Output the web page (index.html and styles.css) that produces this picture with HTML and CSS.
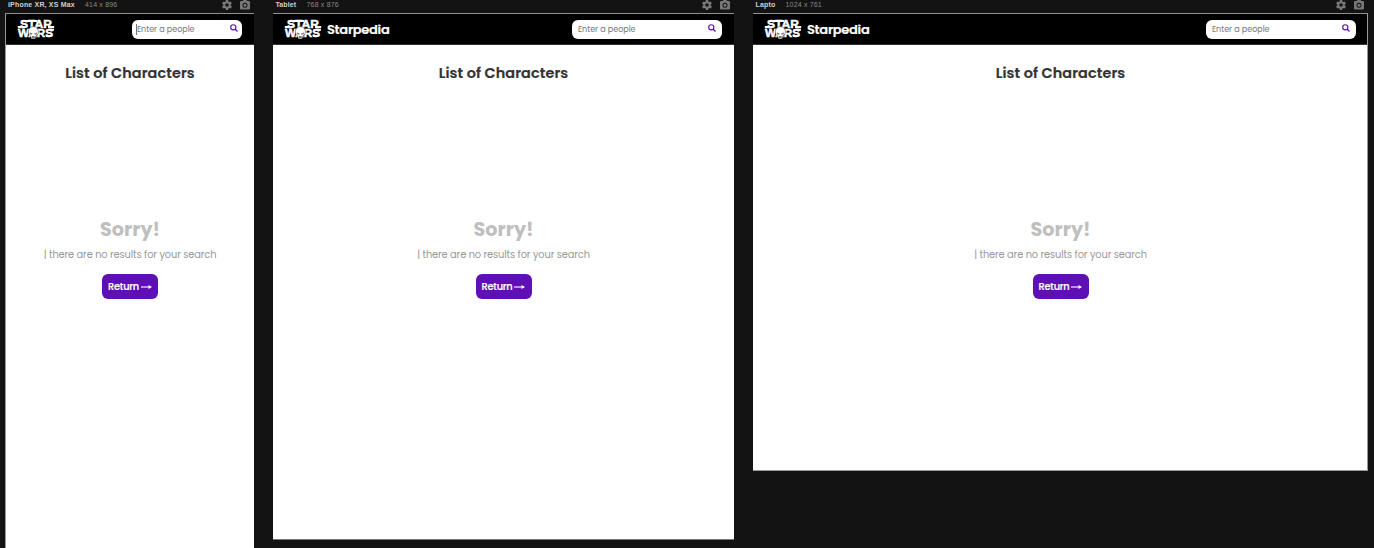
FILE: index.html
```html
<!DOCTYPE html>
<html lang="en">
<head>
<meta charset="utf-8">
<title>Starpedia</title>
<link rel="stylesheet" href="styles.css">
</head>
<body>
<svg class="defs" aria-hidden="true">
  <symbol id="gear" viewBox="0 0 24 24"><path fill-rule="evenodd" d="M19.4 13a7.500 7.500 0 0 0 0-2l2.100-1.650a.5.5 0 0 0 .12-.64l-2-3.460a.5.5 0 0 0-.61-.22l-2.490 1a7.300 7.300 0 0 0-1.690-.98l-.38-2.650A.5.5 0 0 0 14 2h-4a.5.5 0 0 0-.49.42l-.38 2.650a7.700 7.700 0 0 0-1.690.98l-2.490-1a.5.5 0 0 0-.61.22l-2 3.460a.5.5 0 0 0 .12.64L4.570 11a7.900 7.900 0 0 0 0 2l-2.110 1.650a.5.5 0 0 0-.12.64l2 3.460c.12.22.39.3.61.22l2.490-1c.52.4 1.080.73 1.690.98l.38 2.650c.03.24.24.4.49.4h4c.25 0 .46-.16.49-.4l.38-2.650a7.700 7.700 0 0 0 1.690-.98l2.490 1c.23.09.49 0 .61-.22l2-3.460a.5.5 0 0 0-.12-.64zM12 15.500a3.500 3.500 0 1 1 0-7 3.500 3.500 0 0 1 0 7z"/></symbol>
  <symbol id="camera" viewBox="0 0 24 24"><path fill-rule="evenodd" d="M9 2 7.200 4H4a2 2 0 0 0-2 2v13a2 2 0 0 0 2 2h16a2 2 0 0 0 2-2V6a2 2 0 0 0-2-2h-3.200L15 2zm3 15.500a5 5 0 1 1 0-10 5 5 0 0 1 0 10z"/><circle cx="12" cy="12.500" r="3"/></symbol>
  <symbol id="search" viewBox="0 0 8 8"><circle cx="3.300" cy="3.300" r="2.600" fill="none" stroke="#5b12b5" stroke-width="1.150"/><path d="M5.200 5.200 7.500 7.500" stroke="#5b12b5" stroke-width="1.300"/></symbol>
  <symbol id="logo" viewBox="0 0 38 20">
    <g class="logo-text">
      <text x="3" y="9.200" textLength="32" lengthAdjust="spacingAndGlyphs">STAR</text>
      <text x="1" y="18" textLength="35" lengthAdjust="spacingAndGlyphs">WARS</text>
    </g>
    <path fill="#fff" d="M.8 7h7v2.200h-7zM6 .9h14v2H6zM31 7h6.200v2.200H31zM32 10h5v1.800h-5zM29 16h5v2h-5z"/>
    <path fill="#fff" stroke="#000" stroke-width=".4" d="M11.300 13.500C11.100 10 13.200 7.600 16.300 7.600s5.400 2.400 5.200 5.900c0 1.500-1.700 2.700-2.600 3.500l-.7 3h-3.800l-.7-3c-1-.8-2.400-2-2.400-3.500z"/>
    <path fill="#777" d="M12.500 13.500l3 .8-.4 1.500-2-.5zM20.300 13.500l-3 .8.400 1.500 2-.5zM15.200 17h2.400l.4 2.500h-3.200z"/>
  </symbol>
</svg>
<main class="workspace">
  <section class="device phone">
    <div class="device-bar"><b class="n-phone">iPhone XR, XS Max</b><span>414 x 896</span><svg class="tool"><use href="#gear"/></svg><svg class="tool"><use href="#camera"/></svg></div>
    <div class="screen">
      <header><svg class="logo"><use href="#logo"/></svg><div class="search focused"><span>Enter a people</span><svg><use href="#search"/></svg></div></header>
      <h1>List of Characters</h1>
      <h2>Sorry!</h2>
      <p>| there are no results for your search</p>
      <a class="return"><span>Return</span><svg viewBox="0 0 11 6"><path d="M0 3h10" stroke="#fff" stroke-width="1.100"/><path d="M7.500 1 11 3 7.500 5z" fill="#fff"/></svg></a>
    </div>
  </section>
  <section class="device tablet">
    <div class="device-bar"><b class="n-tablet">Tablet</b><span>768 x 876</span><svg class="tool"><use href="#gear"/></svg><svg class="tool"><use href="#camera"/></svg></div>
    <div class="screen">
      <header><svg class="logo"><use href="#logo"/></svg><strong>Starpedia</strong><div class="search"><span>Enter a people</span><svg><use href="#search"/></svg></div></header>
      <h1>List of Characters</h1>
      <h2>Sorry!</h2>
      <p>| there are no results for your search</p>
      <a class="return"><span>Return</span><svg viewBox="0 0 11 6"><path d="M0 3h10" stroke="#fff" stroke-width="1.100"/><path d="M7.500 1 11 3 7.500 5z" fill="#fff"/></svg></a>
    </div>
  </section>
  <section class="device laptop">
    <div class="device-bar"><b class="n-laptop">Lapto</b><span>1024 x 761</span><svg class="tool"><use href="#gear"/></svg><svg class="tool"><use href="#camera"/></svg></div>
    <div class="screen">
      <header><svg class="logo"><use href="#logo"/></svg><strong>Starpedia</strong><div class="search"><span>Enter a people</span><svg><use href="#search"/></svg></div></header>
      <h1>List of Characters</h1>
      <h2>Sorry!</h2>
      <p>| there are no results for your search</p>
      <a class="return"><span>Return</span><svg viewBox="0 0 11 6"><path d="M0 3h10" stroke="#fff" stroke-width="1.100"/><path d="M7.500 1 11 3 7.500 5z" fill="#fff"/></svg></a>
    </div>
  </section>
</main>
</body>
</html>
```
FILE: styles.css
```css
* { box-sizing: border-box; }
body { margin: 0; height: 548px; overflow: hidden; background: #131313; }
.defs { display: none; }
.workspace { display: flex; gap: 19px; padding-left: 5px; height: 548px; align-items: flex-start; font-family: Poppins, Inter, sans-serif; white-space: nowrap; }
.device { flex: none; }
.phone { width: 249px; }
.tablet { width: 461px; }
.laptop { width: 615px; }
.device-bar { height: 13px; display: flex; align-items: flex-start; padding: 0 3px 0 2.500px; color: #8a8a8a; font: 7px/9px "Liberation Sans", Arial, sans-serif; }
.phone .device-bar { padding-left: 3px; }
.device-bar b { color: #d0d0d0; margin-right: 10px; }
.device-bar span { margin-right: auto; letter-spacing: .18px; }
.n-phone { width: 67px; letter-spacing: .18px; }
.n-tablet { width: 21px; letter-spacing: .1px; }
.n-laptop { width: 20px; letter-spacing: .2px; }
.tool { width: 12px; height: 12px; margin-left: 6px; margin-top: -1px; fill: #777; }
.screen { display: flex; flex-direction: column; align-items: center; background: #fff; border-top: 1px solid #909090; }
.phone .screen { height: 535px; border-left: 1px solid #999; }
.tablet .screen { height: 527px; border-bottom: 1px solid #777; }
.laptop .screen { height: 458px; border-bottom: 1px solid #999; border-right: 1px solid #999; padding-left: 1px; }
header { align-self: stretch; height: 31px; flex: none; display: flex; align-items: center; background: #000; border-bottom: 1px solid #333; padding: 0 12px 0 11px; }
.laptop header { padding-right: 11px; margin-left: -1px; }
.logo { width: 38px; height: 20px; }
.logo-text { font: bold 11.800px "Liberation Sans", Arial, sans-serif; fill: #fff; stroke: #fff; stroke-width: .5px; }
header strong { margin: 1px 0 0 5px; color: #fff; font-size: 13px; font-weight: 600; letter-spacing: -.3px; -webkit-text-stroke: .2px #fff; }
.search { margin-left: auto; width: 150px; height: 19px; background: #fff; border-radius: 6px; display: flex; align-items: center; justify-content: space-between; padding: 0 6px; color: #777; font-size: 8px; }
.search span { line-height: 11px; padding-top: 1px; }
.search svg { width: 8px; height: 8px; margin-top: -2px; }
.search.focused { width: 110px; padding: 0 4px; }
.search.focused span { border-left: 1px solid #777; padding-top: 0; }
h1 { margin: 17px 0 0; height: 22px; font-size: 14.400px; line-height: 22px; font-weight: 600; letter-spacing: .1px; color: #333; -webkit-text-stroke: .2px #333; }
h2 { margin: 131px 0 0; height: 30px; font-size: 19.200px; line-height: 30px; font-weight: 700; color: #bfbfbf; }
p { margin: 2px 0 0; height: 15px; font-size: 9.800px; line-height: 15px; letter-spacing: -.1px; color: #989898; }
.return { margin-top: 12px; width: 56px; height: 25px; border-radius: 6px; background: #5f10b5; color: #fff; font-size: 9.800px; font-weight: 500; letter-spacing: -.25px; display: flex; align-items: center; justify-content: center; gap: 2px; -webkit-text-stroke: .2px #fff; }
.return svg { width: 11px; height: 6px; margin-top: 1px; }
```
